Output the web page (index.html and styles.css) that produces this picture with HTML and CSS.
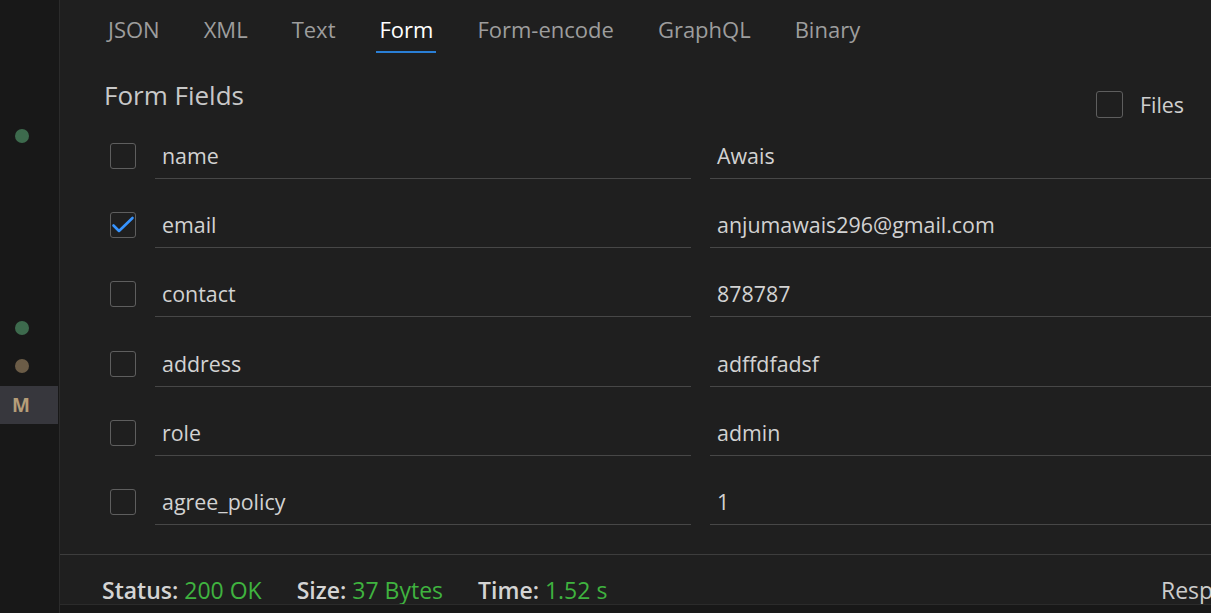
FILE: index.html
```html
<!DOCTYPE html>
<html lang="en">
<head>
<meta charset="utf-8">
<title>Form Fields</title>
<link rel="stylesheet" href="styles.css">
</head>
<body>
<div class="app">
  <aside class="sidebar">
    <span class="dot dot-green dot-1"></span>
    <span class="dot dot-green dot-2"></span>
    <span class="dot dot-brown dot-3"></span>
    <div class="side-item">M</div>
  </aside>
  <main class="panel">
    <nav class="tabs">
      <span class="tab">JSON</span>
      <span class="tab">XML</span>
      <span class="tab">Text</span>
      <span class="tab active">Form</span>
      <span class="tab">Form-encode</span>
      <span class="tab">GraphQL</span>
      <span class="tab">Binary</span>
    </nav>
    <section class="form">
      <div class="form-head">
        <h2 class="title">Form Fields</h2>
        <label class="files"><span class="cb"></span><span>Files</span></label>
      </div>
      <div class="rows">
        <div class="row"><span class="cb"></span><div class="field key">name</div><div class="field val">Awais</div></div>
        <div class="row"><span class="cb checked"><svg viewBox="0 0 26 26" width="26" height="26"><path d="M3.5 13.5 L9 19 L22.5 6" fill="none" stroke="#3794ff" stroke-width="2.6" stroke-linecap="round" stroke-linejoin="round"/></svg></span><div class="field key">email</div><div class="field val">anjumawais296@gmail.com</div></div>
        <div class="row"><span class="cb"></span><div class="field key">contact</div><div class="field val">878787</div></div>
        <div class="row"><span class="cb"></span><div class="field key">address</div><div class="field val">adffdfadsf</div></div>
        <div class="row"><span class="cb"></span><div class="field key">role</div><div class="field val">admin</div></div>
        <div class="row"><span class="cb"></span><div class="field key">agree_policy</div><div class="field val">1</div></div>
      </div>
    </section>
    <footer class="status">
      <span class="stat"><b>Status:</b> <span class="ok">200 OK</span></span>
      <span class="stat"><b>Size:</b> <span class="ok">37 Bytes</span></span>
      <span class="stat"><b>Time:</b> <span class="ok">1.52 s</span></span>
      <span class="resp">Response</span>
    </footer>
    <div class="strip"></div>
  </main>
</div>
</body>
</html>
```
FILE: styles.css
```css
* { box-sizing: border-box; }
html, body { margin: 0; padding: 0; height: 100%; overflow: hidden; }
body {
  background: #1f1f1f;
  font-family: "Open Sans", "Noto Sans", sans-serif;
  color: #cccccc;
}
.app { display: flex; height: 613px; }

.sidebar {
  width: 60px;
  flex: 0 0 60px;
  background: #181818;
  border-right: 1px solid #2b2b2b;
  display: flex;
  flex-direction: column;
  padding-top: 129px;
}
.dot {
  width: 14px; height: 14px; border-radius: 50%;
  margin-left: 15px;
  display: block;
}
.dot-green { background: #3d6a4d; }
.dot-brown { background: #6b5c47; }
.dot-2 { margin-top: 178px; }
.dot-3 { margin-top: 24px; }
.side-item {
  margin-top: 13px;
  width: 58px; height: 38px;
  background: #37373d;
  color: #b59d78;
  font-weight: 700;
  font-size: 19px;
  line-height: 38px;
  padding-left: 12px;
}

.panel {
  flex: 1;
  min-width: 0;
  display: flex;
  flex-direction: column;
  overflow: hidden;
}

.tabs {
  display: flex;
  gap: 38px;
  padding-left: 45px;
  height: 53px;
  flex: 0 0 53px;
}
.tab {
  font-size: 22px;
  line-height: 30px;
  padding: 14px 3px 7px;
  border-bottom: 2px solid transparent;
  color: #9d9d9d;
  white-space: nowrap;
}
.tab.active { color: #ffffff; border-bottom-color: #2a7fd6; }

.form { flex: 1; min-height: 0; }
.form-head {
  height: 80px;
  display: flex;
  justify-content: space-between;
  align-items: flex-start;
  padding: 0 27px 0 44px;
}
.title {
  margin: 0;
  padding-top: 24px;
  font-size: 26px;
  line-height: 36px;
  font-weight: 400;
  color: #c8c8c8;
}
.files {
  margin-top: 33px;
  height: 36px;
  display: flex;
  align-items: center;
  gap: 17px;
  font-size: 21.4px;
  color: #cfcfcf;
}
.files .cb { width: 27px; height: 27px; }

.cb {
  width: 26px; height: 26px;
  flex: 0 0 auto;
  border: 1px solid #5e5e5e;
  border-radius: 3px;
  display: block;
  position: relative;
}
.cb svg { position: absolute; left: -1px; top: -1px; }

.rows {
  display: flex;
  flex-direction: column;
  gap: 23.2px;
  padding-left: 50px;
}
.row {
  display: flex;
  align-items: center;
  height: 46px;
}
.row .cb { margin-right: 19px; }
.field {
  height: 46px;
  border-bottom: 1px solid #474747;
  padding-left: 7px;
  font-size: 21.4px;
  line-height: 45px;
  color: #d2d2d2;
  white-space: nowrap;
  flex: 0 0 536px;
}
.field.val { margin-left: 19px; }

.status {
  flex: 0 0 50px;
  border-top: 1px solid #3d3d3d;
  display: flex;
  gap: 35px;
  padding: 21px 0 0 42px;
  font-size: 23px;
  line-height: 28px;
  white-space: nowrap;
}
.stat b { font-weight: 600; color: #d4d4d4; }
.ok { color: #3fb33f; }
.resp {
  flex: 0 0 50px;
  min-width: 0;
  margin-left: auto;
  overflow: visible;
  color: #cccccc;
}
.strip {
  flex: 0 0 9px;
  border-top: 1px solid #2b2b2b;
  background: #181818;
}
```
